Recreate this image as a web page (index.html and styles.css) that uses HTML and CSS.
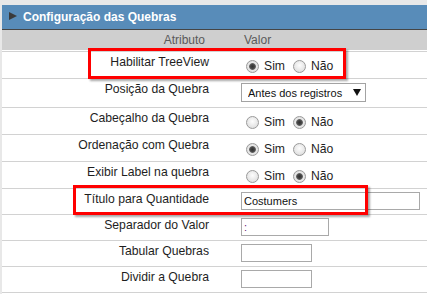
FILE: index.html
```html
<!DOCTYPE html>
<html lang="pt-BR">
<head>
<meta charset="utf-8">
<title>Configuração das Quebras</title>
<link rel="stylesheet" href="styles.css">
</head>
<body>
<section class="panel">
  <div class="panel-title">
    <svg class="caret" width="8" height="8" viewBox="0 0 8 8" aria-hidden="true"><polygon points="0,0 8,4 0,8" fill="#3a3a3a"/></svg>
    <span>Configuração das Quebras</span>
  </div>
  <div class="col-head-wrap">
    <div class="col-head">
      <div class="ch-attr">Atributo</div>
      <div class="ch-val">Valor</div>
    </div>
  </div>
  <div class="rows">
    <div class="row radio-row">
      <div class="lbl">Habilitar TreeView</div>
      <div class="val">
        <label class="opt"><input class="radio" type="radio" name="tree" checked>Sim</label>
        <label class="opt"><input class="radio" type="radio" name="tree">Não</label>
      </div>
    </div>
    <div class="row select-row">
      <div class="lbl">Posição da Quebra</div>
      <div class="val">
        <span class="select"><select><option>Antes dos registros</option></select></span>
      </div>
    </div>
    <div class="row radio-row">
      <div class="lbl">Cabeçalho da Quebra</div>
      <div class="val">
        <label class="opt"><input class="radio" type="radio" name="cab">Sim</label>
        <label class="opt"><input class="radio" type="radio" name="cab" checked>Não</label>
      </div>
    </div>
    <div class="row radio-row">
      <div class="lbl">Ordenação com Quebra</div>
      <div class="val">
        <label class="opt"><input class="radio" type="radio" name="ord" checked>Sim</label>
        <label class="opt"><input class="radio" type="radio" name="ord">Não</label>
      </div>
    </div>
    <div class="row radio-row">
      <div class="lbl">Exibir Label na quebra</div>
      <div class="val">
        <label class="opt"><input class="radio" type="radio" name="exl">Sim</label>
        <label class="opt"><input class="radio" type="radio" name="exl" checked>Não</label>
      </div>
    </div>
    <div class="row input-row">
      <div class="lbl">Título para Quantidade</div>
      <div class="val"><input class="txt txt-lg" type="text" value="Costumers"></div>
    </div>
    <div class="row input-row">
      <div class="lbl">Separador do Valor</div>
      <div class="val"><input class="txt txt-md txt-sep" type="text" value=":"></div>
    </div>
    <div class="row input-row">
      <div class="lbl">Tabular Quebras</div>
      <div class="val"><input class="txt txt-sm" type="text" value=""></div>
    </div>
    <div class="row input-row">
      <div class="lbl">Dividir a Quebra</div>
      <div class="val"><input class="txt txt-sm" type="text" value=""></div>
    </div>
  </div>
</section>
<div class="mark mark-tree"></div>
<div class="mark mark-title"></div>
</body>
</html>
```
FILE: styles.css
```css
* { box-sizing: border-box; }

html, body {
  margin: 0;
  padding: 0;
}

body {
  position: relative;
  height: 294px;
  overflow: hidden;
  background: #e8e8e8;
  font-family: "Liberation Sans", Arial, sans-serif;
  font-size: 12px;
  color: #1e1e1e;
}

.panel {
  margin: 5px 0 0 2px;
  background: #fff;
  min-height: 289px;
}

.panel-title {
  display: flex;
  align-items: center;
  gap: 6px;
  height: 25px;
  padding-left: 7px;
  background: #588cb9;
  border-bottom: 1px solid #454545;
  color: #fff;
  font-weight: bold;
  line-height: 24px;
}

.caret {
  display: block;
  margin-top: -2px;
}

.col-head-wrap {
  padding-bottom: 1px;
  border-bottom: 1px solid #d2d2d2;
}

.col-head {
  display: grid;
  grid-template-columns: 234px 1fr;
  height: 20px;
  line-height: 20px;
  background: #cfcfcf;
  color: #5a5a5a;
}

.ch-attr {
  text-align: right;
  padding-right: 31px;
}

.ch-val {
  padding-left: 8px;
}

.row {
  display: grid;
  grid-template-columns: 234px 1fr;
  border-bottom: 1px solid #d2d2d2;
  font-size: 12.2px;
}

.radio-row { height: 27px; }
.select-row { height: 29px; }
.input-row { height: 26px; }

.lbl {
  text-align: right;
  padding: 3px 27px 0 0;
  line-height: 14px;
  white-space: nowrap;
}

.val {
  padding-left: 5px;
}

.radio-row .val {
  display: flex;
  align-items: center;
  height: 14px;
  margin-top: 7px;
  line-height: 14px;
}

.opt {
  display: flex;
  align-items: center;
  margin-right: 3px;
}

.radio {
  appearance: none;
  -webkit-appearance: none;
  width: 13px;
  height: 13px;
  margin: 0 5px;
  border: 1px solid #9a9a9a;
  border-radius: 50%;
  background: radial-gradient(circle at 50% 40%, #fdfdfd 0, #ececec 45%, #d6d6d6 100%);
}

.radio:checked {
  background: radial-gradient(circle at 50% 50%, #333 0, #444 2px, #666 3px, #e9e9e9 3.8px, #d6d6d6 100%);
}

.select {
  position: relative;
  display: block;
  width: 125px;
  height: 19px;
  margin-top: 4px;
}

.select select {
  appearance: none;
  -webkit-appearance: none;
  display: block;
  width: 100%;
  height: 100%;
  margin: 0;
  padding: 0 0 0 6px;
  border: 1px solid #a3a3a3;
  border-radius: 0;
  background: #fff;
  font-family: "Liberation Sans", Arial, sans-serif;
  font-size: 11px;
  color: #111;
}

.select::after {
  content: "";
  position: absolute;
  right: 5px;
  top: 6px;
  width: 0;
  height: 0;
  border-left: 4px solid transparent;
  border-right: 4px solid transparent;
  border-top: 7px solid #111;
}

.txt {
  display: block;
  height: 18px;
  margin: 3px 0 0 0;
  padding: 0 2px;
  border: 1px solid #a9a9a9;
  border-radius: 0;
  background: #fff;
  font-family: "Liberation Sans", Arial, sans-serif;
  font-size: 11px;
  color: #111;
  outline: none;
}

.txt-lg { width: 179px; }
.txt-md { width: 88px; }
.txt-sm { width: 71px; }
.txt-sep { color: #6a1b7a; }

.mark {
  position: absolute;
  border: 3px solid #ff0000;
  box-shadow: 2px 2px 2px rgba(0, 0, 0, 0.35);
  pointer-events: none;
}

.mark-tree {
  left: 88px;
  top: 48px;
  width: 258px;
  height: 31px;
}

.mark-title {
  left: 73px;
  top: 185px;
  width: 295px;
  height: 30px;
}
```
